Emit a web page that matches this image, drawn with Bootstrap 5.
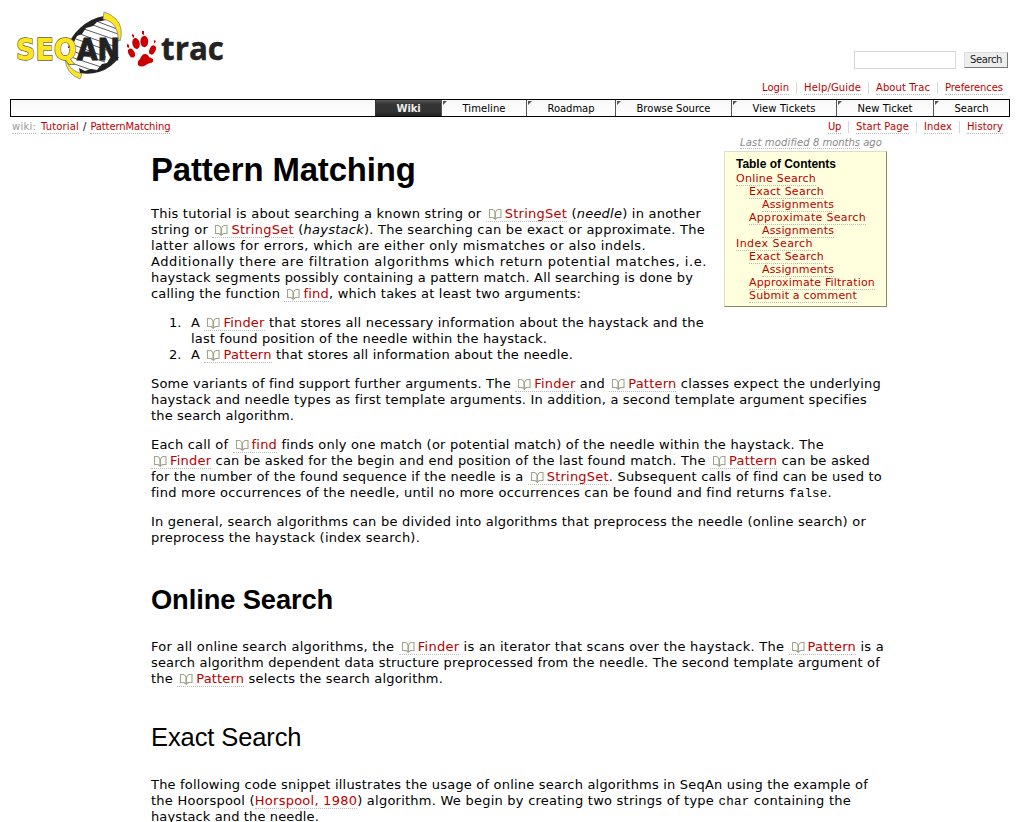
<!DOCTYPE html>
<html lang="en">
<head>
<meta charset="utf-8">
<title>Tutorial/PatternMatching – SeqAn</title>
<link href="https://cdn.jsdelivr.net/npm/bootstrap@5.3.0/dist/css/bootstrap.min.css" rel="stylesheet">
<style>
body{font:13px/16px Verdana,"DejaVu Sans",sans-serif;color:#000;background:#fff;overflow:hidden;height:822px}
a,a:hover{color:#b00;text-decoration:none;border-bottom:1px dotted #bbb}
p,ol{margin:0 0 13px}
ol{padding-left:40px;list-style:none;counter-reset:n}
ol li{position:relative;counter-increment:n}
ol li::before{content:counter(n) ".";position:absolute;left:-22px}
.ln{display:block;white-space:nowrap}
.fit{display:inline-block;white-space:nowrap}
h1,h2,h3{font-family:"Liberation Sans",Arial,sans-serif;letter-spacing:-.004em;margin:0;white-space:nowrap;color:#000}
h1{font-size:32.9px;font-weight:700;line-height:40px}
h2{font-size:27.3px;font-weight:700;line-height:34px;margin:37px 0 22px}
h3{font-size:25.5px;font-weight:400;line-height:32px;margin:34px 0 24px}
code{font:12.500px "Liberation Mono",monospace;color:#000}
.site-head{height:99px;padding:0 10px}
.head-right{padding-top:51px}
.find-form{margin-right:2px}
.metanav{margin:13px 7px 0 0}
.q{width:102px;height:18px;border:1px solid #d7d7d7;border-radius:0;padding:0}
.go{width:44px;height:16px;border:1px solid #999;border-color:#ddd #777 #777 #ddd;background:#eee;border-radius:0;padding:0;font-size:10px;line-height:14px;color:#222}
.tiny{font-size:10px;line-height:12px}
.sep{border-right:1px solid #d7d7d7;padding-right:7px;margin-right:7px;height:12px}
.mainbar{margin:0 10px;height:18px;border:1px solid #000;background:linear-gradient(#f7f7f7,#fff);font-size:10px;line-height:17px}
.tab{border-left:1px solid #555;text-align:center;position:relative}
.tab::before{content:"";position:absolute;left:1px;top:1px;border-top:4px solid #555;border-right:4px solid transparent}
.tab.on{background:linear-gradient(#555 0,#333 30%,#333 70%,#222);color:#eee;font-weight:700;border-color:#333}
.tab.on::before{display:none}
.ctx{padding:4px 17px 0 12px;height:20px}
.crumb-root{color:#999;border-bottom:1px dotted #bbb;margin-right:5px}
.page{width:736px;margin-left:151px}
.intro{height:178px}
.toc{width:163px;height:156px;margin:-1px 0 0;background:#ffd;border:1px solid #d7d7d7;border-color:#ddc #886 #886 #ddc;padding:6px 0 0 11px;font-size:11px;line-height:13px}
.toc b{font:700 12px/12px "Liberation Sans",Arial,sans-serif;display:block;height:14px}
.toc div{height:13px;white-space:nowrap}
.i1{padding-left:13px}.i2{padding-left:26px}
.mod{font-size:10px;line-height:12px;color:#888;font-style:italic;height:16px;padding:1px 0 0 16px}
.mod span{border-bottom:1px dotted #bbb;height:12px}
.bk{display:inline-block;width:19px;height:12px;vertical-align:-2px}
</style>
<script src="https://cdn.jsdelivr.net/npm/bootstrap@5.3.0/dist/js/bootstrap.bundle.min.js"></script>
</head>
<body>
<svg width="0" height="0" class="position-absolute"><defs><g id="book" fill="#fffffa" stroke="#a0a491" stroke-width="1.100"><path d="M9 11L7 9.500H3.500V1.500H6.500Q8.500 2 9 4.500z"/><path d="M9.500 11L11.500 9.500H15V1.500H12Q10 2 9.500 4.500z"/></g></defs></svg>
<header class="site-head d-flex justify-content-between">
<svg width="225" height="88" viewBox="10 0 225 88">
<path d="M68 48Q72 36 81 27Q92 17 106 16L119 32L119 52Q112 66 98 70Q88 73 81 72L68 64Z" fill="#fff"/>
<g stroke="#333" stroke-width=".8"><path d="M96 21l21 8M90 24l28 10M84 29l35 12M80 34l36 13M76 39l36 13M71 44l35 13M69 50l36 12M68 56l36 12M69 62l25 9"/></g>
<path d="M68 48Q70 37 80 28Q91 18 104 16L106 20L97 22L93 26L86 28L82 34L77 36L74 42L69 48Z" fill="#222"/>
<path d="M79 68L85 71L91 69L97 70L102 64L107 63L110 58L119 57Q112 68 99 72Q89 75 80 73Z" fill="#222"/>
<path d="M104 12Q119 17 121 29Q122 35 120 41L118 38Q118 29 112 23Q108 20 103 19Z" fill="#fde51f" stroke="#777" stroke-width=".7"/>
<path d="M66 58Q68 70 82 74L80 79Q66 74 65 58Z" fill="#fde51f" stroke="#777" stroke-width=".7"/>
<text x="16" y="60" textLength="104" lengthAdjust="spacingAndGlyphs" font-family="DejaVu Sans,sans-serif" font-size="29.500" font-weight="700" paint-order="stroke"><tspan fill="#fde51f" stroke="#666030" stroke-width="1.300">SEQ</tspan><tspan fill="#222" stroke="#222" stroke-width="1">AN</tspan></text>
<g fill="#c00"><ellipse cx="131.500" cy="53" rx="3" ry="4.800" transform="rotate(-28 131.500 53)"/><ellipse cx="136" cy="43.500" rx="3.700" ry="5.500" transform="rotate(-12 136 43.500)"/><ellipse cx="144.300" cy="41.500" rx="3.900" ry="5.700"/><ellipse cx="152.500" cy="50" rx="3" ry="4.800" transform="rotate(25 152.500 50)"/><path d="M138 65q-1-4 2-6q2-5 5-5q3 0 4 3q2 1 4 2q1 4-3 4q-3 1-4 2q-5 3-8 0z"/><path d="M127 44l2 1v3l-2-1zM132 34l2 1v3l-2-2zM142 31l2 0v4l-2-1zM154 40l2 1-2 3z"/></g>
<text x="161" y="59.500" textLength="63" lengthAdjust="spacingAndGlyphs" font-family="Open Sans,sans-serif" font-size="32" font-weight="700" fill="#222" stroke="#222" stroke-width=".4">trac</text>
</svg>
<div class="head-right d-flex flex-column align-items-end">
<div class="find-form d-flex align-items-center gap-2"><input class="q" aria-label="Search"><button class="go"><span class="fit" data-w="32">Search</span></button></div>
<nav class="metanav d-flex tiny"><span class="sep"><a href="#" class="fit" data-w="27">Login</a></span><span class="sep"><a href="#" class="fit" data-w="57">Help/Guide</a></span><span class="sep"><a href="#" class="fit" data-w="54">About Trac</a></span><a href="#" class="fit" data-w="58">Preferences</a></nav>
</div>
</header>
<nav class="mainbar d-flex justify-content-end">
<div class="tab on" style="width:66px"><span class="fit" data-w="24">Wiki</span></div><div class="tab" style="width:85px"><span class="fit" data-w="43">Timeline</span></div><div class="tab" style="width:89px"><span class="fit" data-w="47">Roadmap</span></div><div class="tab" style="width:116px"><span class="fit" data-w="74">Browse Source</span></div><div class="tab" style="width:105px"><span class="fit" data-w="63">View Tickets</span></div><div class="tab" style="width:97px"><span class="fit" data-w="55">New Ticket</span></div><div class="tab" style="width:76px"><span class="fit" data-w="34">Search</span></div>
</nav>
<div class="ctx d-flex justify-content-between align-items-start tiny">
<div class="d-flex"><span class="fit crumb-root" data-w="24">wiki:</span><a href="#" class="fit" data-w="38">Tutorial</a><span class="mx-1">/</span><a href="#" class="fit" data-w="80">PatternMatching</a></div>
<div class="d-flex align-items-start"><span class="sep"><a href="#" class="fit" data-w="13">Up</a></span><span class="sep"><a href="#" class="fit" data-w="53">Start Page</a></span><span class="sep"><a href="#" class="fit" data-w="28">Index</a></span><a href="#" class="fit" data-w="36">History</a></div>
</div>
<main class="page">
<div class="intro d-flex justify-content-between">
<div style="padding-top:13px"><h1>Pattern Matching</h1>
<p style="margin-top:16px"><span class="ln" data-w="550">This tutorial is about searching a known string or <a href="#"><i class="bk"></i>StringSet</a> (<em>needle</em>) in another</span><span class="ln" data-w="554">string or <a href="#"><i class="bk"></i>StringSet</a> (<em>haystack</em>). The searching can be exact or approximate. The</span><span class="ln" data-w="495">latter allows for errors, which are either only mismatches or also indels.</span><span class="ln" data-w="556">Additionally there are filtration algorithms which return potential matches, i.e.</span><span class="ln" data-w="542">haystack segments possibly containing a pattern match. All searching is done by</span><span class="ln" data-w="430">calling the function <a href="#"><i class="bk"></i>find</a>, which takes at least two arguments:</span></p></div>
<aside style="margin-top:-1px"><div class="mod"><span class="fit" data-w="70">Last modified</span> <span class="fit" data-w="47">8 months</span> ago</div>
<div class="toc"><b><span class="fit" data-w="100">Table of Contents</span></b><div><a href="#" data-w="80">Online Search</a></div><div class="i1"><a href="#" data-w="75">Exact Search</a></div><div class="i2"><a href="#" data-w="72">Assignments</a></div><div class="i1"><a href="#" data-w="117">Approximate Search</a></div><div class="i2"><a href="#" data-w="72">Assignments</a></div><div><a href="#" data-w="77">Index Search</a></div><div class="i1"><a href="#" data-w="75">Exact Search</a></div><div class="i2"><a href="#" data-w="72">Assignments</a></div><div class="i1"><a href="#" data-w="126">Approximate Filtration</a></div><div class="i1"><a href="#" data-w="108">Submit a comment</a></div></div></aside>
</div>
<ol><li><span class="ln" data-w="513">A <a href="#"><i class="bk"></i>Finder</a> that stores all necessary information about the haystack and the</span><span class="ln" data-w="356">last found position of the needle within the haystack.</span></li><li><span class="ln" data-w="382">A <a href="#"><i class="bk"></i>Pattern</a> that stores all information about the needle.</span></li></ol>
<p><span class="ln" data-w="730">Some variants of find support further arguments. The <a href="#"><i class="bk"></i>Finder</a> and <a href="#"><i class="bk"></i>Pattern</a> classes expect the underlying</span><span class="ln" data-w="716">haystack and needle types as first template arguments. In addition, a second template argument specifies</span><span class="ln" data-w="143">the search algorithm.</span></p>
<p><span class="ln" data-w="673">Each call of <a href="#"><i class="bk"></i>find</a> finds only one match (or potential match) of the needle within the haystack. The</span><span class="ln" data-w="719"><a href="#"><i class="bk"></i>Finder</a> can be asked for the begin and end position of the last found match. The <a href="#"><i class="bk"></i>Pattern</a> can be asked</span><span class="ln" data-w="731">for the number of the found sequence if the needle is a <a href="#"><i class="bk"></i>StringSet</a>. Subsequent calls of find can be used to</span><span class="ln" data-w="681">find more occurrences of the needle, until no more occurrences can be found and find returns <code>false</code>.</span></p>
<p><span class="ln" data-w="715">In general, search algorithms can be divided into algorithms that preprocess the needle (online search) or</span><span class="ln" data-w="269">preprocess the haystack (index search).</span></p>
<h2>Online Search</h2>
<p><span class="ln" data-w="733">For all online search algorithms, the <a href="#"><i class="bk"></i>Finder</a> is an iterator that scans over the haystack. The <a href="#"><i class="bk"></i>Pattern</a> is a</span><span class="ln" data-w="729">search algorithm dependent data structure preprocessed from the needle. The second template argument of</span><span class="ln" data-w="292">the <a href="#"><i class="bk"></i>Pattern</a> selects the search algorithm.</span></p>
<h3>Exact Search</h3>
<p><span class="ln" data-w="717">The following code snippet illustrates the usage of online search algorithms in SeqAn using the example of</span><span class="ln" data-w="700">the Hoorspool (<a href="#">Horspool, 1980</a>) algorithm. We begin by creating two strings of type <code>char</code> containing the</span><span class="ln" data-w="168">haystack and the needle.</span></p>
</main>
<script>
document.querySelectorAll('.bk').forEach(function(e){e.innerHTML='<svg width="19" height="12" class="d-block"><use href="#book"/></svg>'});
// Spread each run of text over its measure.
document.querySelectorAll('[data-w]').forEach(function(e){
  var r=document.createRange();r.selectNodeContents(e);
  var w=r.getBoundingClientRect().width,n=e.textContent.length;
  e.style.letterSpacing=((e.dataset.w-w)/n)+'px';
});
</script>
</body>
</html>
